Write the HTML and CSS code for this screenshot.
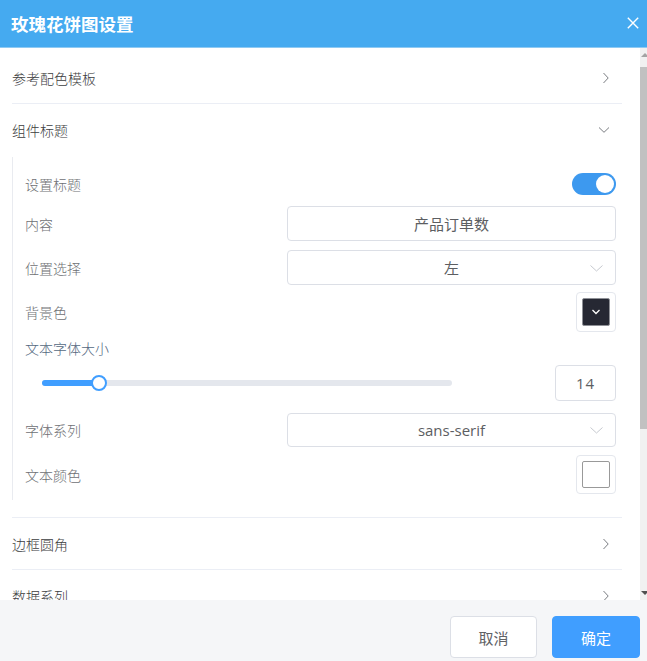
FILE: index.html
```html
<!DOCTYPE html>
<html lang="zh-CN">
<head>
<meta charset="utf-8">
<title>玫瑰花饼图设置</title>
<link rel="stylesheet" href="styles.css">
</head>
<body>
<div class="dialog">
  <header class="dlg-head">
    <h1 class="dlg-title">玫瑰花饼图设置</h1>
    <button class="dlg-close" aria-label="关闭">
      <svg width="12" height="12" viewBox="0 0 12 12"><path d="M0.8 0.8 L11.2 11.2 M11.2 0.8 L0.8 11.2" stroke="#fff" stroke-width="1.4" fill="none"/></svg>
    </button>
  </header>

  <div class="dlg-body">
    <div class="scroll-content">
      <div class="collapse">
        <div class="c-item">
          <div class="c-head">
            <span>参考配色模板</span>
            <svg class="c-arrow" width="12" height="12" viewBox="0 0 12 12"><path d="M5.5 1 L10.2 6 L5.5 11" stroke="#7a7d82" stroke-width="1" fill="none"/></svg>
          </div>
        </div>

        <div class="c-item is-open">
          <div class="c-head">
            <span>组件标题</span>
            <svg class="c-arrow" width="12" height="12" viewBox="0 0 12 12"><path d="M1 3.5 L6 8.3 L11 3.5" stroke="#7a7d82" stroke-width="1" fill="none"/></svg>
          </div>
          <div class="c-wrap">
            <div class="form">
              <div class="f-row f-switch">
                <span class="f-label">设置标题</span>
                <span class="switch"><span class="switch-knob"></span></span>
              </div>
              <div class="f-row f-input">
                <span class="f-label">内容</span>
                <div class="control">产品订单数</div>
              </div>
              <div class="f-row f-select">
                <span class="f-label">位置选择</span>
                <div class="control select">左
                  <svg class="sel-arrow" width="13" height="7" viewBox="0 0 13 7"><path d="M0.5 0.5 L6.5 6 L12.5 0.5" stroke="#c6c9cf" stroke-width="1" fill="none"/></svg>
                </div>
              </div>
              <div class="f-row f-color">
                <span class="f-label">背景色</span>
                <span class="swatch"><span class="swatch-fill swatch-dark">
                  <svg width="10" height="6" viewBox="0 0 10 6"><path d="M1.5 1 L5 4.5 L8.5 1" stroke="#fff" stroke-width="1.3" fill="none"/></svg>
                </span></span>
              </div>
              <div class="f-row f-heading">
                <span class="f-label f-label-accent">文本字体大小</span>
              </div>
              <div class="f-row f-slider">
                <div class="slider">
                  <div class="slider-fill"></div>
                  <span class="slider-knob"></span>
                </div>
                <div class="num-input">14</div>
              </div>
              <div class="f-row f-select2">
                <span class="f-label">字体系列</span>
                <div class="control select">sans-serif
                  <svg class="sel-arrow" width="13" height="7" viewBox="0 0 13 7"><path d="M0.5 0.5 L6.5 6 L12.5 0.5" stroke="#c6c9cf" stroke-width="1" fill="none"/></svg>
                </div>
              </div>
              <div class="f-row f-color2">
                <span class="f-label">文本颜色</span>
                <span class="swatch"><span class="swatch-fill swatch-white"></span></span>
              </div>
            </div>
          </div>
        </div>

        <div class="c-item">
          <div class="c-head">
            <span>边框圆角</span>
            <svg class="c-arrow" width="12" height="12" viewBox="0 0 12 12"><path d="M5.5 1 L10.2 6 L5.5 11" stroke="#7a7d82" stroke-width="1" fill="none"/></svg>
          </div>
        </div>

        <div class="c-item">
          <div class="c-head">
            <span>数据系列</span>
            <svg class="c-arrow" width="12" height="12" viewBox="0 0 12 12"><path d="M5.5 1 L10.2 6 L5.5 11" stroke="#7a7d82" stroke-width="1" fill="none"/></svg>
          </div>
        </div>
      </div>
    </div>

    <div class="scrollbar">
      <span class="sb-arrow sb-up"></span>
      <div class="sb-track"><div class="sb-thumb"></div></div>
      <span class="sb-arrow sb-down"></span>
    </div>
  </div>

  <footer class="dlg-foot">
    <button class="btn btn-cancel">取消</button>
    <button class="btn btn-primary">确定</button>
  </footer>
</div>
</body>
</html>
```

FILE: styles.css
```css
* { box-sizing: border-box; }

html, body {
  margin: 0;
  padding: 0;
  background: #fff;
}

body {
  font-family: "Open Sans", "Noto Sans CJK SC", "Noto Sans", sans-serif;
  font-size: 14px;
  color: #606266;
  overflow: hidden;
}

.dialog {
  width: 647px;
  height: 661px;
  display: flex;
  flex-direction: column;
}

/* header */
.dlg-head {
  flex: 0 0 48px;
  background: #45aaf0;
  display: flex;
  align-items: center;
  justify-content: space-between;
  padding: 0 7px 0 11px;
  border-bottom: 1px solid #8fcaf3;
}

.dlg-title {
  margin: 0;
  font-size: 17.5px;
  font-weight: 700;
  color: #fff;
  line-height: 1;
  font-family: "Noto Sans CJK SC", sans-serif;
}

.dlg-close {
  width: 14px;
  height: 14px;
  padding: 0;
  border: 0;
  background: transparent;
  display: flex;
  align-items: center;
  justify-content: center;
  margin-top: -2px;
}

/* body */
.dlg-body {
  flex: 0 0 552px;
  display: flex;
  overflow: hidden;
}

.scroll-content {
  flex: 1;
  min-width: 0;
  overflow: hidden;
  padding: 4px 18px 0 12px;
}

.c-head {
  height: 52px;
  border-bottom: 1px solid #ebeef5;
  display: flex;
  align-items: center;
  justify-content: space-between;
  color: #3c3d40;
  font-size: 14px;
  font-weight: 300;
  font-family: "Noto Sans CJK SC", sans-serif;
}

.c-arrow {
  margin-right: 12px;
}

.is-open .c-head {
  border-bottom-color: transparent;
}

.c-wrap {
  border-bottom: 1px solid #ebeef5;
  padding: 1px 6px 17px 0;
}

.form {
  border-left: 1px solid #e9ebf0;
  padding: 12px 0 6px 12px;
  display: flex;
  flex-direction: column;
}

.f-row {
  display: flex;
  align-items: center;
  justify-content: space-between;
}

.f-label {
  font-family: "Noto Sans CJK SC", sans-serif;
  font-weight: 300;
  color: #6e7074;
}

.f-label-accent {
  color: #55697f;
}

.f-switch { height: 30px; }
.f-input { height: 35px; margin-top: 7px; }
.f-select { height: 35px; margin-top: 9px; }
.f-color { height: 40px; margin-top: 7px; }
.f-heading { height: 20px; margin-top: 6px; }
.f-slider { height: 36px; margin-top: 7px; }
.f-select2 { height: 34px; margin-top: 12px; }
.f-color2 { height: 39px; margin-top: 8px; }

.control {
  flex: 0 0 329px;
  height: 100%;
  border: 1px solid #dcdfe6;
  border-radius: 4px;
  display: flex;
  align-items: center;
  justify-content: center;
  font-size: 15px;
  color: #5c5e62;
  position: relative;
}

.sel-arrow {
  position: absolute;
  right: 12px;
  top: 50%;
  margin-top: -3px;
}

/* switch */
.switch {
  width: 44px;
  height: 22px;
  border-radius: 11px;
  background: #3d99ef;
  display: flex;
  align-items: center;
  justify-content: flex-end;
  padding-right: 2px;
}

.switch-knob {
  width: 18px;
  height: 18px;
  border-radius: 50%;
  background: #fff;
}

/* color swatch */
.swatch {
  width: 40px;
  height: 100%;
  border: 1px solid #e4e7ed;
  border-radius: 4px;
  padding: 5px;
  display: flex;
}

.swatch-fill {
  flex: 1;
  border-radius: 2px;
  display: flex;
  align-items: center;
  justify-content: center;
}

.swatch-dark {
  background: #262833;
  border: 1px solid #8e9096;
}

.swatch-white {
  background: #fff;
  border: 1px solid #999;
}

/* slider */
.slider {
  width: 410px;
  height: 6px;
  margin-left: 17px;
  border-radius: 3px;
  background: #e4e7ed;
  display: flex;
  align-items: center;
}

.slider-fill {
  width: 57px;
  height: 6px;
  border-radius: 3px 0 0 3px;
  background: #409eff;
}

.slider-knob {
  width: 16px;
  height: 16px;
  margin-left: -8px;
  border-radius: 50%;
  background: #fff;
  border: 2px solid #409eff;
}

.num-input {
  width: 61px;
  height: 100%;
  border: 1px solid #dcdfe6;
  border-radius: 4px;
  display: flex;
  align-items: center;
  justify-content: center;
  font-size: 15px;
  letter-spacing: 1px;
  color: #5c5e62;
}

/* fake scrollbar */
.scrollbar {
  flex: 0 0 7px;
  width: 7px;
  min-width: 0;
  overflow: hidden;
  display: flex;
  flex-direction: column;
  background: #f1f1f1;
}

.sb-arrow {
  flex: 0 0 14px;
  display: flex;
  align-items: center;
  padding-left: 1px;
}

.sb-up::before,
.sb-down::before {
  content: "";
  flex: none;
  width: 0;
  height: 0;
  border-left: 4px solid transparent;
  border-right: 4px solid transparent;
}

.sb-up::before {
  border-bottom: 4px solid #a3a3a3;
}

.sb-down::before {
  border-top: 4px solid #505050;
}

.sb-track {
  flex: 1;
  padding-top: 5px;
}

.sb-thumb {
  height: 362px;
  background: #c1c1c1;
}

/* footer */
.dlg-foot {
  flex: 0 0 61px;
  background: #f5f6f8;
  display: flex;
  justify-content: flex-end;
  align-items: flex-start;
  gap: 15px;
  padding: 16px 7px 0 0;
}

.btn {
  height: 42px;
  border-radius: 4px;
  font-family: "Noto Sans CJK SC", sans-serif;
  font-size: 15px;
  cursor: pointer;
}

.btn-cancel {
  width: 87px;
  background: #fff;
  border: 1px solid #dcdfe6;
  color: #606266;
}

.btn-primary {
  width: 88px;
  background: #409eff;
  border: 1px solid #409eff;
  color: #fff;
}
```
